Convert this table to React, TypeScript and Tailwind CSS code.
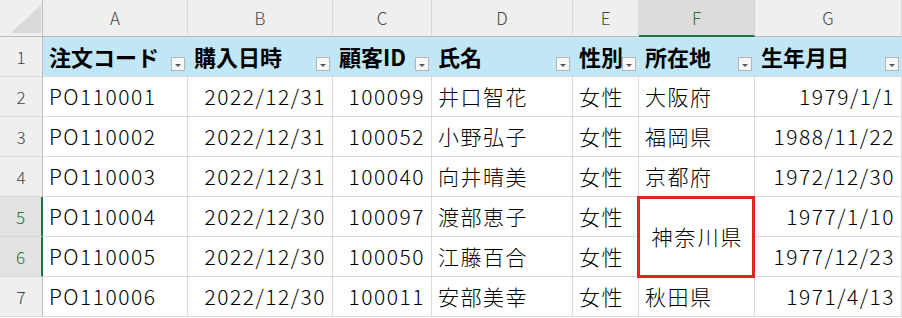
const columns = ['A', 'B', 'C', 'D', 'E', 'F', 'G'];

const headers = ['注文コード', '購入日時', '顧客ID', '氏名', '性別', '所在地', '生年月日'];

// left or right, same order as columns
const align = ['left', 'right', 'right', 'left', 'left', 'left', 'right'];

const rows: (string | null)[][] = [
  ['PO110001', '2022/12/31', '100099', '井口智花', '女性', '大阪府', '1979/1/1'],
  ['PO110002', '2022/12/31', '100052', '小野弘子', '女性', '福岡県', '1988/11/22'],
  ['PO110003', '2022/12/31', '100040', '向井晴美', '女性', '京都府', '1972/12/30'],
  ['PO110004', '2022/12/30', '100097', '渡部恵子', '女性', '神奈川県', '1977/1/10'],
  ['PO110005', '2022/12/30', '100050', '江藤百合', '女性', null, '1977/12/23'],
  ['PO110006', '2022/12/30', '100011', '安部美幸', '女性', '秋田県', '1971/4/13'],
];

function FilterButton() {
  return (
    <span className="absolute bottom-[5px] right-[3px] flex h-[14px] w-[14px] items-center justify-center border border-[#b3b3b3] bg-[#f7f7f7]">
      <svg width="8" height="5" viewBox="0 0 8 5" className="mt-[2px]">
        <path d="M1 1h6L4 4z" fill="#595959" />
      </svg>
    </span>
  );
}

export default function App() {
  return (
    <div className="h-[318px] w-[902px] overflow-hidden bg-white font-['Noto_Sans_CJK_JP','Noto_Sans',sans-serif] text-black">
      <div className="grid grid-cols-[43px_145px_145px_99px_141px_66px_116px_147px] grid-rows-[37px_repeat(7,40px)]">
        {/* corner */}
        <div className="flex items-end justify-end border-b border-r border-[#bcbcbc] bg-[#efefef] pb-[3px] pr-[1px]">
          <svg width="30" height="28" viewBox="0 0 30 28">
            <path d="M30 0V28H0z" fill="#d9d9d9" />
          </svg>
        </div>
        {columns.map((c) => (
          <div
            key={c}
            className={
              c === 'F'
                ? 'flex items-center justify-center border-b-2 border-r border-b-[#217346] border-r-[#cfcfcf] bg-[#dcdcdc] text-[17px] font-light text-[#217346]'
                : 'flex items-center justify-center border-b border-r border-b-[#bcbcbc] border-r-[#d8d8d8] bg-[#efefef] text-[17px] font-light text-[#444]'
            }
          >
            {c}
          </div>
        ))}

        {/* table header row */}
        <div className="flex items-center justify-center border-b border-r border-b-[#d8d8d8] border-r-[#bcbcbc] bg-[#efefef] text-[17px] font-light text-[#444]">
          1
        </div>
        {headers.map((h) => (
          <div
            key={h}
            className="relative flex items-center border-b border-[#d8d8d8] bg-[#c1e6f6] pb-[2px] pl-[6px] text-[22px] font-bold leading-none"
          >
            {h}
            <FilterButton />
          </div>
        ))}

        {rows.map((row, r) => {
          const selected = r === 3 || r === 4;
          return [
            <div
              key={`n${r}`}
              className={
                selected
                  ? 'flex items-center justify-center border-b border-r-2 border-b-[#d8d8d8] border-r-[#217346] bg-[#e3e3e3] text-[17px] font-light text-[#217346]'
                  : 'flex items-center justify-center border-b border-r border-b-[#d8d8d8] border-r-[#bcbcbc] bg-[#efefef] text-[17px] font-light text-[#444]'
              }
            >
              {r + 2}
            </div>,
            ...row.map((cell, c) => {
              if (cell === null) return null;
              if (r === 3 && c === 5) {
                return (
                  <div
                    key={`${r}-${c}`}
                    className="relative row-span-2 flex items-center justify-center border-b border-r border-[#dadada] pl-[2px] text-[21px] font-light tracking-[2px]"
                  >
                    {cell}
                    <span className="absolute -bottom-[2px] -left-[2px] -right-[1px] -top-[1px] border-[3px] border-[#e2231e]" />
                  </div>
                );
              }
              return (
                <div
                  key={`${r}-${c}`}
                  className={
                    align[c] === 'right'
                      ? 'flex items-center justify-end border-b border-r border-[#dadada] pr-[6px] text-[21px] font-light tracking-[1.5px]'
                      : 'flex items-center justify-start border-b border-r border-[#dadada] pl-[6px] text-[21px] font-light tracking-[1.5px]'
                  }
                >
                  {cell}
                </div>
              );
            }),
          ];
        })}
      </div>
    </div>
  );
}
